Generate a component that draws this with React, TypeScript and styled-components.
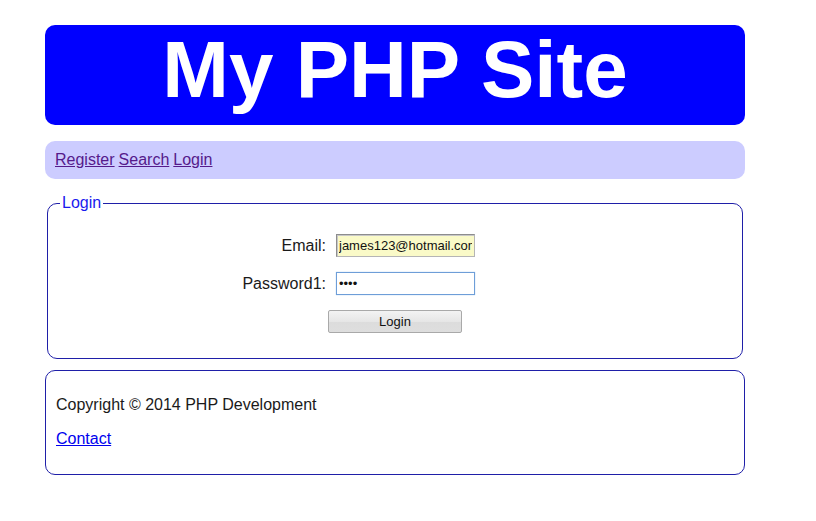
import React from "react";
import styled, { createGlobalStyle } from "styled-components";

const GlobalStyle = createGlobalStyle`
  html, body {
    margin: 0;
    padding: 0;
    background: #ffffff;
  }

  body {
    font-family: "Liberation Sans", Arial, sans-serif;
    font-size: 16px;
    color: #1a1a1a;
  }
`;

const Page = styled.div`
  width: 700px;
  padding: 25px 0 0 45px;
`;

const Header = styled.header`
  height: 100px;
  box-sizing: border-box;
  padding-bottom: 10px;
  background: #0000ff;
  border-radius: 10px;
  text-align: center;

  h1 {
    margin: 0;
    font-size: 80px;
    font-weight: 700;
    line-height: 90px;
    color: #ffffff;
  }
`;

const Nav = styled.nav`
  margin-top: 16px;
  padding: 10px;
  background: #ccccff;
  border-radius: 10px;
  line-height: 18px;
`;

const NavLink = styled.a<{ $visited?: boolean }>`
  color: ${(p) => (p.$visited ? "#551a8b" : "#0000ee")};
  text-decoration: underline;
  margin-right: 4px;
`;

const LoginBox = styled.fieldset`
  margin: 15px 2px 0;
  padding: 0 12px 25px;
  border: 1px solid #1f1fa8;
  border-radius: 10px;

  legend {
    padding: 0 2px;
    color: #1a1aee;
    font-size: 16px;
    line-height: 18px;
  }
`;

const FormGrid = styled.div`
  display: grid;
  grid-template-columns: 266px 139px;
  column-gap: 10px;
  row-gap: 15px;
  align-items: center;
  margin-top: 22px;
`;

const Label = styled.label`
  text-align: right;
  font-size: 16px;
  color: #1a1a1a;
`;

const Input = styled.input<{ $autofill?: boolean; $focused?: boolean }>`
  box-sizing: border-box;
  width: 139px;
  height: 23px;
  padding: 1px 2px;
  font-family: "Liberation Sans", Arial, sans-serif;
  font-size: 13px;
  color: #111;
  outline: none;
  background: ${(p) => (p.$autofill ? "#fafac8" : "#ffffff")};
  border: 1px solid ${(p) => (p.$focused ? "#6e9ed8" : "#b5b5b5")};
  border-top-color: ${(p) => (p.$focused ? "#6e9ed8" : "#8d8d8d")};
  border-left-color: ${(p) => (p.$focused ? "#6e9ed8" : "#8d8d8d")};
  box-shadow: ${(p) =>
    p.$focused ? "0 0 1px #9cc3ee" : "inset 1px 1px 0 #c8c8c8"};
`;

const ButtonRow = styled.div`
  display: flex;
  justify-content: center;
  margin-top: 15px;
`;

const Button = styled.button`
  width: 134px;
  height: 23px;
  padding: 0;
  font-family: "Liberation Sans", Arial, sans-serif;
  font-size: 13px;
  color: #111;
  background: linear-gradient(#f3f3f3, #e6e6e6 50%, #dcdcdc 51%, #dedede);
  border: 1px solid #a9a9a9;
  border-radius: 2px;
`;

const Footer = styled.footer`
  margin-top: 11px;
  padding: 9px 10px 10px;
  border: 1px solid #1f1fa8;
  border-radius: 10px;

  p {
    margin: 16px 0;
    line-height: 18px;
  }
`;

const App = () => {
  return (
    <Page>
      <GlobalStyle />
      <Header>
        <h1>My PHP Site</h1>
      </Header>
      <Nav>
        <NavLink $visited href="#">Register</NavLink>
        <NavLink $visited href="#">Search</NavLink>
        <NavLink $visited href="#">Login</NavLink>
      </Nav>
      <LoginBox>
        <legend>Login</legend>
        <FormGrid>
          <Label htmlFor="email">Email:</Label>
          <Input id="email" type="text" $autofill defaultValue="james123@hotmail.com" />
          <Label htmlFor="pw">Password1:</Label>
          <Input id="pw" type="password" $focused defaultValue="1234" />
        </FormGrid>
        <ButtonRow>
          <Button type="button">Login</Button>
        </ButtonRow>
      </LoginBox>
      <Footer>
        <p>Copyright © 2014 PHP Development</p>
        <p>
          <NavLink href="#">Contact</NavLink>
        </p>
      </Footer>
    </Page>
  );
};

export default App;
